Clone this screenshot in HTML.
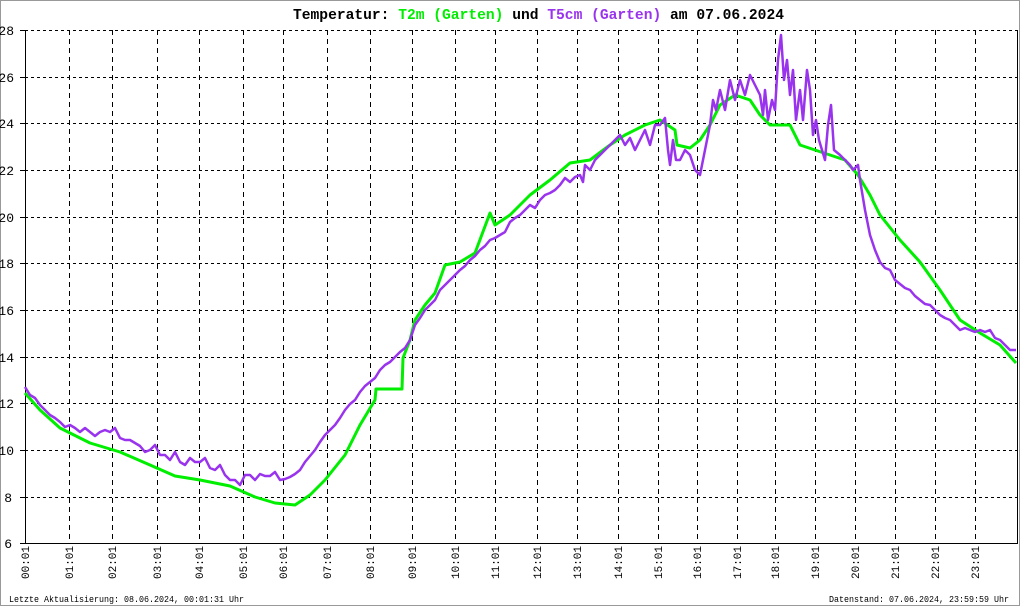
<!DOCTYPE html>
<html><head><meta charset="utf-8"><style>
html,body{margin:0;padding:0;background:#fff}
svg{display:block}
text{font-family:"Liberation Mono",monospace}
</style></head><body>
<svg width="1020" height="606" viewBox="0 0 1020 606" xmlns="http://www.w3.org/2000/svg">
<rect x="0.5" y="0.5" width="1019" height="605" fill="#fff" stroke="#999"/>
<text x="293" y="19" font-size="15" font-weight="bold" textLength="491" lengthAdjust="spacingAndGlyphs"><tspan fill="#000">Temperatur: </tspan><tspan fill="#00ee00">T2m (Garten)</tspan><tspan fill="#000"> und </tspan><tspan fill="#9933ee">T5cm (Garten)</tspan><tspan fill="#000"> am 07.06.2024</tspan></text>
<g stroke="#000" stroke-width="1" stroke-dasharray="3,3" fill="none">
<path d="M25 30.5H1017M25 77.5H1017M25 123.5H1017M25 170.5H1017M25 217.5H1017M25 263.5H1017M25 310.5H1017M25 357.5H1017M25 403.5H1017M25 450.5H1017M25 497.5H1017"/>
</g>
<g stroke="#000" stroke-width="1" stroke-dasharray="5,4" fill="none">
<path d="M69.5 30V543M112.5 30V543M157.5 30V543M199.5 30V543M243.5 30V543M283.5 30V543M327.5 30V543M370.5 30V543M412.5 30V543M455.5 30V543M495.5 30V543M537.5 30V543M577.5 30V543M618.5 30V543M658.5 30V543M697.5 30V543M737.5 30V543M775.5 30V543M815.5 30V543M855.5 30V543M895.5 30V543M935.5 30V543M975.5 30V543"/>
</g>
<path d="M25.5 30V543.5H1017.5V30" stroke="#000" fill="none"/>
<g stroke="#000"><path d="M20 30.5H25M20 77.5H25M20 123.5H25M20 170.5H25M20 217.5H25M20 263.5H25M20 310.5H25M20 357.5H25M20 403.5H25M20 450.5H25M20 497.5H25M20 543.5H25"/></g>
<g font-size="13" fill="#000" text-anchor="end">
<text x="14" y="35">28</text><text x="14" y="82">26</text><text x="14" y="128">24</text><text x="14" y="175">22</text><text x="14" y="222">20</text><text x="14" y="268">18</text><text x="14" y="315">16</text><text x="14" y="362">14</text><text x="14" y="408">12</text><text x="14" y="455">10</text><text x="12" y="502">8</text><text x="12" y="548">6</text>
</g>
<g font-size="11" fill="#000">
<text transform="translate(29,579) rotate(-90)">00:01</text>
<text transform="translate(73,579) rotate(-90)">01:01</text>
<text transform="translate(116,579) rotate(-90)">02:01</text>
<text transform="translate(161,579) rotate(-90)">03:01</text>
<text transform="translate(203,579) rotate(-90)">04:01</text>
<text transform="translate(247,579) rotate(-90)">05:01</text>
<text transform="translate(287,579) rotate(-90)">06:01</text>
<text transform="translate(331,579) rotate(-90)">07:01</text>
<text transform="translate(374,579) rotate(-90)">08:01</text>
<text transform="translate(416,579) rotate(-90)">09:01</text>
<text transform="translate(459,579) rotate(-90)">10:01</text>
<text transform="translate(499,579) rotate(-90)">11:01</text>
<text transform="translate(541,579) rotate(-90)">12:01</text>
<text transform="translate(581,579) rotate(-90)">13:01</text>
<text transform="translate(622,579) rotate(-90)">14:01</text>
<text transform="translate(662,579) rotate(-90)">15:01</text>
<text transform="translate(701,579) rotate(-90)">16:01</text>
<text transform="translate(741,579) rotate(-90)">17:01</text>
<text transform="translate(779,579) rotate(-90)">18:01</text>
<text transform="translate(819,579) rotate(-90)">19:01</text>
<text transform="translate(859,579) rotate(-90)">20:01</text>
<text transform="translate(899,579) rotate(-90)">21:01</text>
<text transform="translate(939,579) rotate(-90)">22:01</text>
<text transform="translate(979,579) rotate(-90)">23:01</text>
</g>
<text x="9" y="602" font-size="9" textLength="235" lengthAdjust="spacingAndGlyphs">Letzte Aktualisierung: 08.06.2024, 00:01:31 Uhr</text>
<text x="829" y="602" font-size="9" textLength="180" lengthAdjust="spacingAndGlyphs">Datenstand: 07.06.2024, 23:59:59 Uhr</text>
<polyline fill="none" stroke="#00ee00" stroke-width="3" stroke-linejoin="round" points="25,393 40,410 60,428 90,443 120,452 150,465 175,476 200,480 230,486 255,497 275,503 295,505 310,495 325,480 345,455 360,425 375,400 376,389 402,389 403,358 410,340 415,320 425,305 435,293 445,265 460,262 475,253 490,213 495,225 510,215 530,195 550,180 570,163 590,160 610,145 625,135 645,125 660,120 675,130 677,145 690,148 700,140 710,125 720,105 735,95 750,100 760,115 770,125 790,125 800,145 815,150 830,155 845,160 858,175 870,195 880,215 900,240 920,262 940,290 960,320 980,333 1000,345 1016,363"/>
<polyline fill="none" stroke="#9933ee" stroke-width="2.5" stroke-linejoin="round" points="25,387 30,395 35,398 40,405 45,410 50,415 55,418 60,422 65,427 70,425 75,428 80,432 85,428 90,432 95,436 100,432 105,430 110,432 115,428 120,438 125,440 130,440 135,443 140,446 145,452 150,450 155,445 160,455 165,455 170,460 175,452 180,462 185,465 190,458 195,462 200,462 205,458 210,468 215,470 220,465 225,475 230,480 235,480 240,485 245,475 250,475 255,480 260,474 265,476 270,476 275,472 280,480 285,479 290,477 295,474 300,470 305,462 310,456 315,450 320,442 325,435 330,430 335,425 340,418 345,410 350,404 355,400 360,392 365,386 370,382 375,378 380,370 385,365 390,362 395,357 400,352 405,348 410,340 415,325 420,318 425,310 430,305 435,300 440,290 445,285 450,280 455,275 460,270 465,266 470,260 475,256 480,250 485,246 490,240 495,238 500,235 505,232 510,222 515,218 520,215 525,210 530,205 535,208 540,200 545,195 550,193 555,190 560,185 565,178 570,182 575,177 580,175 583,182 585,165 590,170 595,160 600,155 605,150 610,145 615,140 620,135 625,145 630,138 635,150 640,140 645,130 650,145 655,125 660,125 665,118 668,150 670,165 673,140 676,160 680,160 685,150 690,155 695,170 700,175 705,150 710,125 713,100 716,110 720,90 725,110 730,80 735,100 740,80 745,95 750,75 755,85 760,95 763,115 765,90 768,120 772,100 775,110 778,60 781,35 784,80 787,60 790,95 793,70 796,120 800,90 803,120 807,70 810,90 813,135 816,120 819,140 822,150 825,160 828,125 831,105 834,150 840,155 845,160 850,165 853,170 858,165 860,180 865,210 870,235 875,250 880,262 885,268 890,270 895,280 900,284 905,288 910,290 915,296 920,300 925,304 930,305 935,310 940,315 945,318 950,320 955,325 960,330 965,328 970,330 975,332 980,330 985,332 990,330 995,338 1000,340 1005,345 1010,350 1016,350"/>
</svg>
</body></html>
